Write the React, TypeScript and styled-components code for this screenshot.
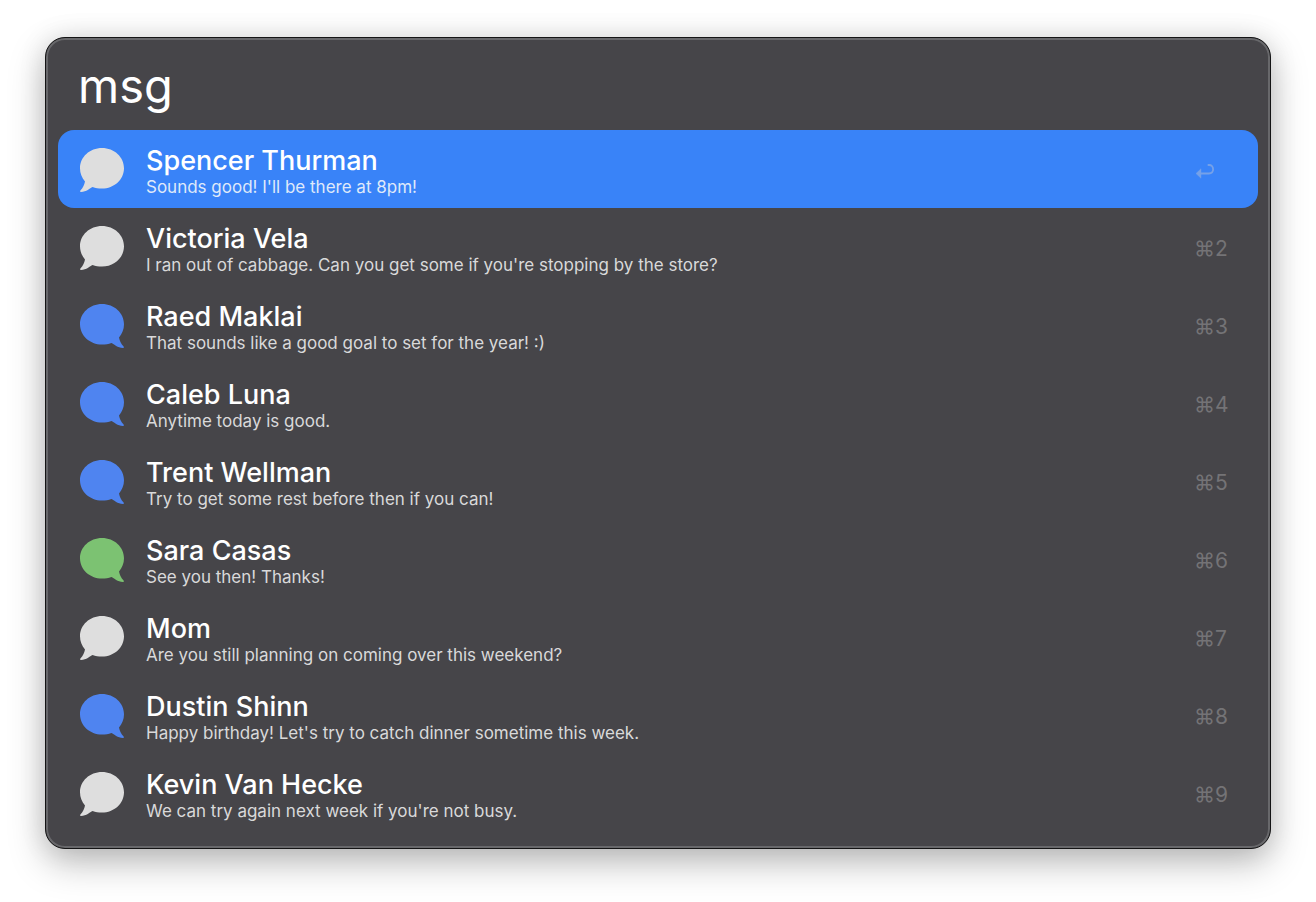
import React, { useState } from "react";
import styled, { createGlobalStyle } from "styled-components";

const GlobalStyle = createGlobalStyle`
  * { box-sizing: border-box; }
  body {
    margin: 0;
    background: #fff;
    font-family: Inter, "Liberation Sans", sans-serif;
  }
`;

const Page = styled.main`
  padding: 37px 45px 53px;
`;

const Panel = styled.section`
  padding: 12px 12px 16px;
  border: 1px solid #141415;
  border-radius: 20px;
  background: #464549;
  box-shadow: inset 0 0 0 2px #68686b, 0 14px 36px rgba(0, 0, 0, 0.26), 0 0 28px rgba(0, 0, 0, 0.1);
`;

const SearchInput = styled.input`
  display: block;
  width: 100%;
  height: 80px;
  padding: 0 20px 10px;
  border: 0;
  outline: 0;
  background: transparent;
  color: #fff;
  font: 400 47px Inter, "Liberation Sans", sans-serif;
`;

const Results = styled.ul`
  margin: 0;
  padding: 0;
  list-style: none;
`;

const ResultButton = styled.button<{ $selected: boolean }>`
  display: flex;
  align-items: center;
  gap: 22px;
  width: 100%;
  height: 78px;
  padding: 2px 22px 0;
  border: 0;
  border-radius: 16px;
  background: ${(p) => (p.$selected ? "#3983f8" : "transparent")};
  color: #fff;
  font-family: inherit;
  text-align: left;
  cursor: pointer;
`;

const BubbleIcon = styled.svg<{ $flip: boolean }>`
  flex: none;
  width: 44px;
  height: 44px;
  transform: ${(p) => (p.$flip ? "scaleX(-1)" : "none")};
`;

const Copy = styled.span`
  display: flex;
  flex: 1;
  flex-direction: column;
  min-width: 0;
  padding-top: 2px;
  white-space: nowrap;
`;

const Name = styled.span`
  font-size: 27px;
  font-weight: 500;
  line-height: 32px;
`;

const Message = styled.span<{ $selected: boolean }>`
  color: ${(p) => (p.$selected ? "#dfe9fa" : "#d9d9da")};
  font-size: 17px;
  font-weight: 400;
  line-height: 20px;
`;

const Shortcut = styled.span`
  display: flex;
  align-items: center;
  width: 42px;
  padding-top: 2px;
  color: #747376;
  font-size: 21px;
  line-height: 28px;
  white-space: nowrap;
`;

type Kind = "draft" | "imessage" | "sms";

const bubbleColors: Record<Kind, string> = {
  draft: "#dedede",
  imessage: "#4f84f0",
  sms: "#7cc272",
};

const results: { name: string; message: string; kind: Kind }[] = [
  { name: "Spencer Thurman", message: "Sounds good! I'll be there at 8pm!", kind: "draft" },
  { name: "Victoria Vela", message: "I ran out of cabbage. Can you get some if you're stopping by the store?", kind: "draft" },
  { name: "Raed Maklai", message: "That sounds like a good goal to set for the year! :)", kind: "imessage" },
  { name: "Caleb Luna", message: "Anytime today is good.", kind: "imessage" },
  { name: "Trent Wellman", message: "Try to get some rest before then if you can!", kind: "imessage" },
  { name: "Sara Casas", message: "See you then! Thanks!", kind: "sms" },
  { name: "Mom", message: "Are you still planning on coming over this weekend?", kind: "draft" },
  { name: "Dustin Shinn", message: "Happy birthday! Let's try to catch dinner sometime this week.", kind: "imessage" },
  { name: "Kevin Van Hecke", message: "We can try again next week if you're not busy.", kind: "draft" },
];

function Bubble({ kind }: { kind: Kind }) {
  return (
    <BubbleIcon viewBox="0 0 44 44" $flip={kind !== "draft"} aria-hidden="true">
      <path
        fill={bubbleColors[kind]}
        d="M22 0C34.2 0 44 9 44 20.3S34.2 40.6 22 40.6C18.6 40.6 15.4 40 12.6 38.9C9.8 40.2 6.5 43.6 1 44C0 44-0.2 43.2 0.4 42.4C3 39.6 4.3 36.8 5 33.4C1.8 29.8 0 25.3 0 20.3C0 9 9.8 0 22 0Z"
      />
    </BubbleIcon>
  );
}

function ReturnIcon() {
  return (
    <svg width="22" height="18" viewBox="0 0 22 18" role="img" aria-label="Return">
      <path d="M6 11.5H15C17.5 11.5 19.1 9.9 19.1 7.3S17.5 3 15 3H14.4" fill="none" stroke="#76a1e8" strokeWidth="1.8" strokeLinecap="round" />
      <path d="M2 11.5L7 6.7V16.3Z" fill="#76a1e8" stroke="#76a1e8" strokeWidth="0.4" strokeLinejoin="round" />
    </svg>
  );
}

export default function App() {
  const [query, setQuery] = useState("msg");
  const [selected, setSelected] = useState(0);

  return (
    <>
      <GlobalStyle />
      <Page>
        <Panel>
          <SearchInput
            aria-label="Search"
            spellCheck={false}
            value={query}
            onChange={(e) => setQuery(e.target.value)}
          />
          <Results>
            {results.map((r, i) => (
              <li key={r.name}>
                <ResultButton type="button" $selected={i === selected} onClick={() => setSelected(i)}>
                  <Bubble kind={r.kind} />
                  <Copy>
                    <Name>{r.name}</Name>
                    <Message $selected={i === selected}>{r.message}</Message>
                  </Copy>
                  <Shortcut>{i === selected ? <ReturnIcon /> : `⌘${i + 1}`}</Shortcut>
                </ResultButton>
              </li>
            ))}
          </Results>
        </Panel>
      </Page>
    </>
  );
}
